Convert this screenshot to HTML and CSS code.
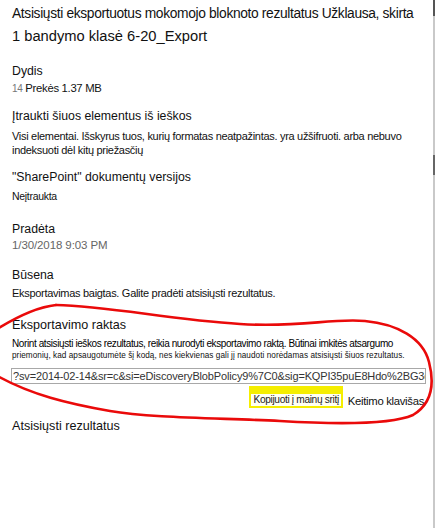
FILE: index.html
```html
<!DOCTYPE html>
<html lang="lt">
<head>
  <meta charset="UTF-8" />
  <meta name="viewport" content="width=device-width, initial-scale=1.0"/>
  <title>Eksportavimo rezultatai</title>
  <link rel="stylesheet" href="styles.css">
</head>
<body>
  <div class="page">
    <div class="panel">
      <h1 class="title"><span class="title-1">Atsisiųsti eksportuotus mokomojo bloknoto rezultatus Užklausa, skirta</span> <span class="title-2">1 bandymo klasė 6-20_Export</span></h1>

      <div class="field field-size">
        <div class="label">Dydis</div>
        <div class="value"><span class="count">14</span> Prekės 1.37 MB</div>
      </div>

      <div class="field field-include">
        <div class="label">Įtraukti šiuos elementus iš ieškos</div>
        <div class="text">Visi elementai. Išskyrus tuos, kurių formatas neatpažintas. yra užšifruoti. arba nebuvo indeksuoti dėl kitų priežasčių</div>
      </div>

      <div class="field field-versions">
        <div class="label">"SharePoint" dokumentų versijos</div>
        <div class="text small">Neįtraukta</div>
      </div>

      <div class="field field-started">
        <div class="label">Pradėta</div>
        <div class="value muted">1/30/2018 9:03 PM</div>
      </div>

      <div class="field field-status">
        <div class="label">Būsena</div>
        <div class="text">Eksportavimas baigtas. Galite pradėti atsisiųsti rezultatus.</div>
      </div>

      <div class="field field-key">
        <div class="label">Eksportavimo raktas</div>
        <div class="key-note">
          <div class="note-1">Norint atsisiųsti ieškos rezultatus, reikia nurodyti eksportavimo raktą. Būtinai imkitės atsargumo</div>
          <div class="note-2">priemonių, kad apsaugotumėte šį kodą, nes kiekvienas gali jį naudoti norėdamas atsisiųsti šiuos rezultatus.</div>
        </div>
        <div class="key-box">?sv=2014-02-14&amp;sr=c&amp;si=eDiscoveryBlobPolicy9%7C0&amp;sig=KQPI35puE8Hdo%2BG3dk7mQ%3D</div>
        <div class="key-actions">
          <span class="copy-btn">Kopijuoti į mainų sritį</span>
          <span class="key-link">Keitimo klavišas</span>
        </div>
      </div>

      <div class="download">Atsisiųsti rezultatus</div>
    </div>
    <div class="edge"></div>
  </div>

  <!-- hand-drawn marker loop around the export key -->
  <svg class="marker" width="435" height="528" viewBox="0 0 435 528">
    <path d="M56 305 C 110 306 170 320 240 324 C 300 328 330 318 365 321 C 397 324 423 338 429 362 C 435 385 431 404 413 415 C 390 425 330 424 280 421 C 220 418 150 418 110 411 C 70 404 30 395 -6 374"/>
    <path d="M56 305 C 38 307 16 317 -6 331"/>
  </svg>
</body>
</html>
```

FILE: styles.css
```css
body {
  margin: 0;
  background: #fff;
  font-family: "Liberation Sans", Arial, sans-serif;
  color: #111;
}

.page {
  display: flex;
  height: 528px;
}

.panel {
  width: 421px;
  padding-left: 12px;
  display: flex;
  flex-direction: column;
}

.edge {
  width: 2px;
  background:
    linear-gradient(#555, #555) 0 0 / 2px 16px no-repeat,
    linear-gradient(#666, #666) 0 155px / 2px 20px no-repeat,
    #c9c9c9;
}

.title {
  margin: 3px 0 0;
  font-size: 13.8px;
  font-weight: normal;
  line-height: 22px;
  color: #111;
}

.title-1 {
  display: block;
  white-space: nowrap;
  letter-spacing: -0.35px;
}

.title-2 {
  display: block;
  font-size: 14.7px;
}

.field {
  display: flex;
  flex-direction: column;
}

.label {
  font-size: 12.3px;
  line-height: 16px;
  color: #111;
}

.value {
  font-size: 11.3px;
  line-height: 16px;
  letter-spacing: -0.3px;
}

.value .count {
  font-size: 10px;
  color: #777;
}

.muted {
  color: #666;
  font-size: 11.5px;
  letter-spacing: -0.1px;
}

.text {
  font-size: 11px;
  line-height: 14px;
  letter-spacing: -0.3px;
  margin-top: 5px;
}

.text.small {
  font-size: 10.5px;
  margin-top: 4px;
}

.field-size { margin-top: 16px; }
.field-size .value { margin-top: 1px; }
.field-include { margin-top: 11px; }
.field-versions { margin-top: 12px; }
.field-started { margin-top: 18px; }
.field-status { margin-top: 14px; }
.field-status .text { margin-top: 3px; }
.field-key { margin-top: 17px; }

.field-key .label {
  font-size: 12.6px;
}

.key-note {
  margin-top: 5px;
  line-height: 12px;
}

.note-1 {
  font-size: 10px;
  letter-spacing: -0.4px;
  white-space: nowrap;
  color: #000;
}

.note-2 {
  font-size: 8.2px;
  letter-spacing: 0.05px;
  white-space: nowrap;
}

.key-box {
  margin: 6px 0 0 -1px;
  width: 412px;
  height: 14px;
  border: 1px solid #a8a8a8;
  font-size: 11px;
  line-height: 14px;
  letter-spacing: -0.15px;
  color: #333;
  white-space: nowrap;
  overflow: hidden;
  padding-left: 1px;
}

.key-actions {
  display: flex;
  justify-content: flex-end;
  align-items: flex-end;
  gap: 5px;
  margin-top: 2px;
  padding-right: 9px;
}

.copy-btn {
  border: 2px solid #f5ee00;
  border-top-width: 8px;
  background: #fffff2;
  padding: 0 2px;
  font-size: 10.2px;
  line-height: 12px;
  letter-spacing: -0.35px;
  color: #222;
}

.key-link {
  font-size: 11.3px;
  line-height: 14px;
  letter-spacing: -0.3px;
}

.download {
  margin-top: 10px;
  font-size: 12.6px;
  line-height: 16px;
}

.marker {
  position: absolute;
  top: 0;
  left: 0;
  pointer-events: none;
}

.marker path {
  fill: none;
  stroke: #ea0a0a;
  stroke-width: 2.6;
  stroke-linecap: round;
}
```
